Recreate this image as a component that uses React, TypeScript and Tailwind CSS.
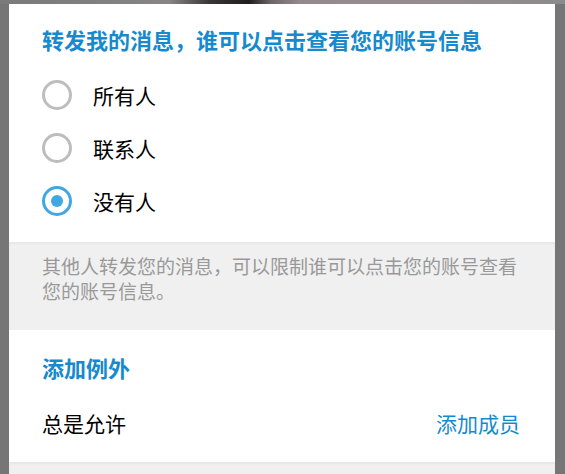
import React from "react";

const OPTIONS = [
  { label: "所有人", checked: false },
  { label: "联系人", checked: false },
  { label: "没有人", checked: true },
];

function Radio({ checked }: { checked: boolean }) {
  if (checked) {
    return (
      <div className="w-[30px] h-[30px] rounded-full border-[3px] border-[#40a7e3] flex items-center justify-center shrink-0">
        <div className="w-[12px] h-[12px] rounded-full bg-[#40a7e3]" />
      </div>
    );
  }
  return <div className="w-[30px] h-[30px] rounded-full border-[3px] border-[#bdbdbd] shrink-0" />;
}

export default function App() {
  return (
    <div
      className="w-[565px] h-[474px] bg-[#767676] overflow-hidden flex flex-col"
      style={{ fontFamily: '"Noto Sans CJK SC", "Noto Sans", sans-serif' }}
    >
      {/* blurred backdrop peeking above the dialog */}
      <div className="h-[4px] w-full bg-[linear-gradient(to_right,#7a7a7a_0%,#868484_30%,#3a3636_37%,#1f1c1c_44%,#6e6666_48%,#948a8b_53%,#968c8d_75%,#8b8b8b_100%)]" />

      <div className="ml-[9px] w-[546px] flex-1 bg-[#f0f0f0] flex flex-col">
        {/* privacy options */}
        <div className="bg-white pt-[22px] pb-[15px]">
          <div className="pl-[33px] text-[22px] leading-[26px] font-bold text-[#168acd]">
            转发我的消息，谁可以点击查看您的账号信息
          </div>
          <div className="pt-[16px]">
            {OPTIONS.map((o) => (
              <div key={o.label} className="h-[53px] flex items-center pl-[33px]">
                <Radio checked={o.checked} />
                <span className="ml-[21px] text-[21px] leading-[26px] text-[#000]">{o.label}</span>
              </div>
            ))}
          </div>
        </div>

        {/* hint */}
        <div className="h-[88px] pt-[11px] pl-[33px] text-[19px] leading-[25px] text-[#999999] shadow-[inset_0_2px_2px_rgba(0,0,0,0.04)]">
          其他人转发您的消息，可以限制谁可以点击您的账号查看
          <br />
          您的账号信息。
        </div>

        {/* exceptions */}
        <div className="bg-white pt-[24px] pb-[26px] px-[33px] pr-[35px]">
          <div className="text-[22px] leading-[26px] font-bold text-[#168acd]">添加例外</div>
          <div className="mt-[30px] flex items-center justify-between text-[21px] leading-[26px]">
            <span className="text-[#000]">总是允许</span>
            <span className="text-[#168acd]">添加成员</span>
          </div>
        </div>

        <div className="flex-1 shadow-[inset_0_2px_2px_rgba(0,0,0,0.04)]" />
      </div>
    </div>
  );
}
